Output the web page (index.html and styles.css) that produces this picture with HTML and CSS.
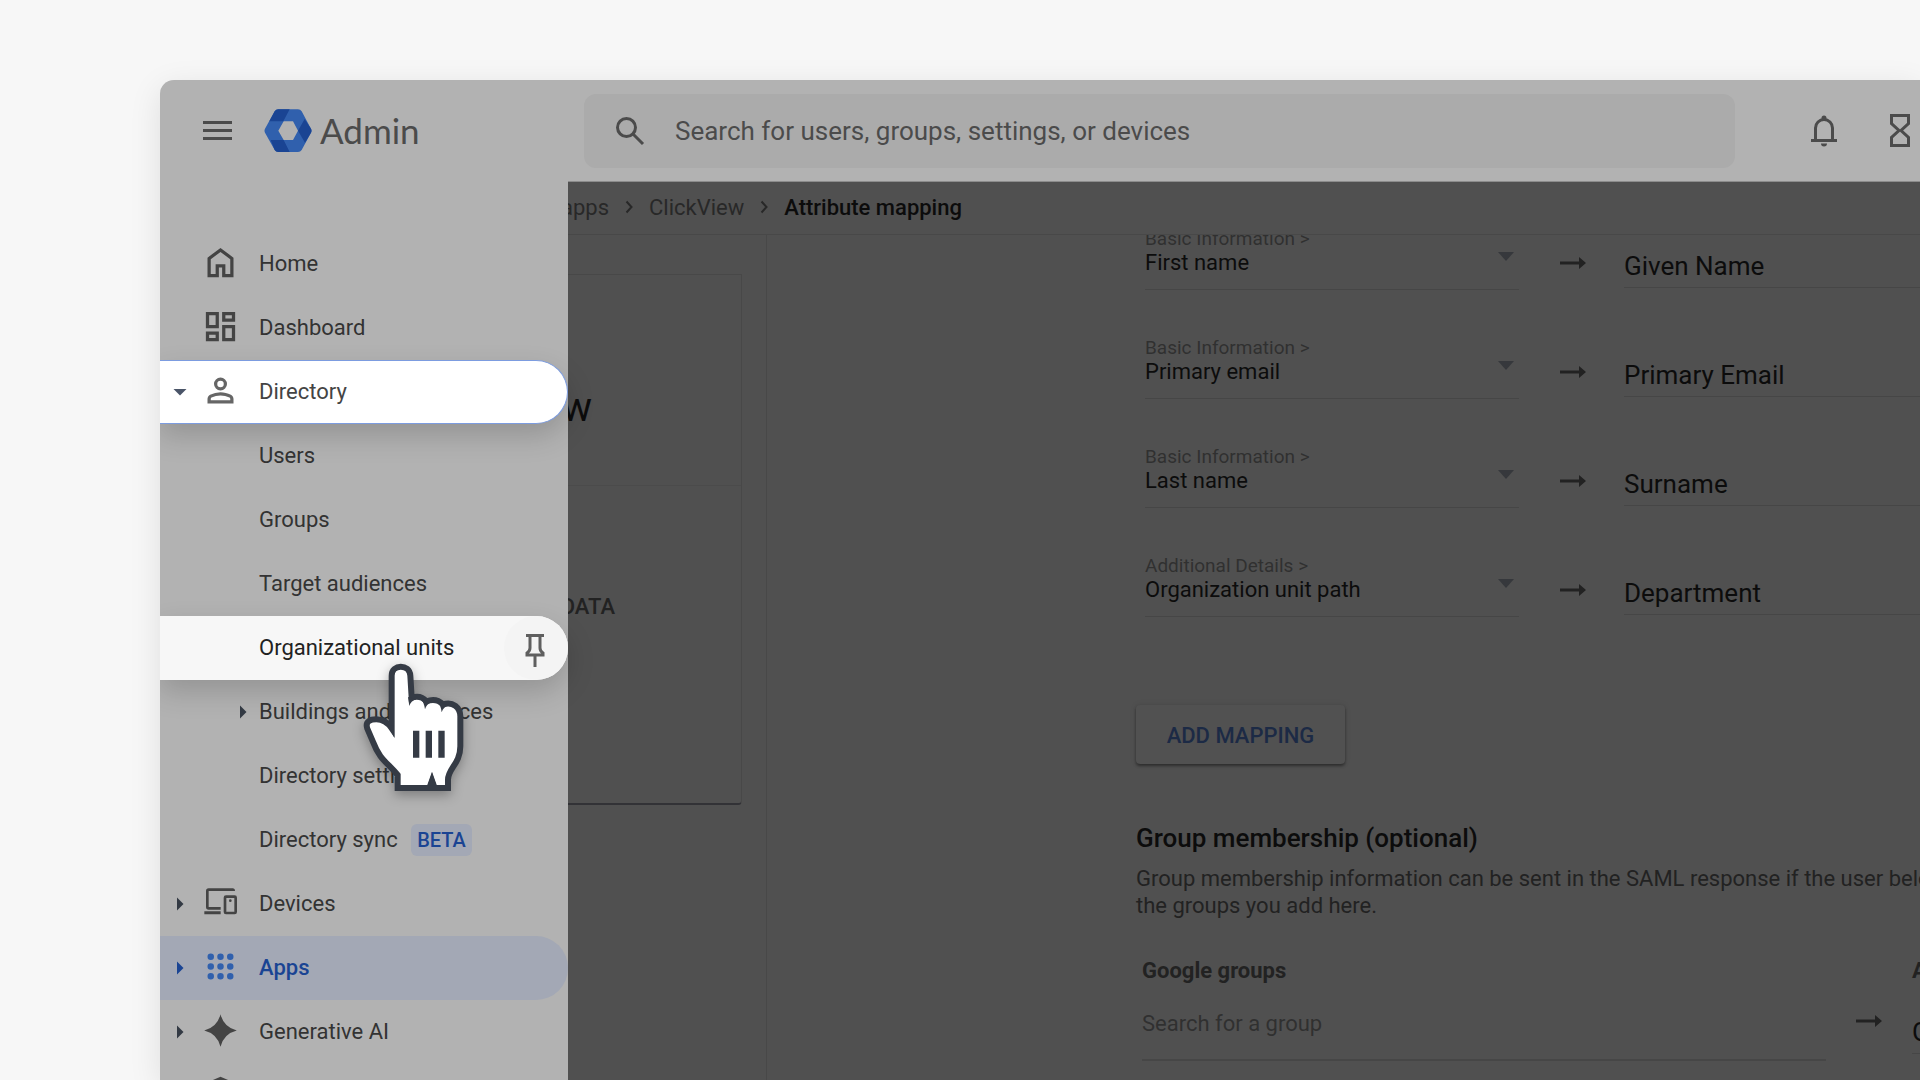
FILE: index.html
```html
<!DOCTYPE html>
<html lang="en">
<head>
<meta charset="utf-8">
<meta name="viewport" content="width=device-width, initial-scale=1">
<title>Admin - Attribute mapping</title>
<link rel="stylesheet" href="styles.css">
</head>
<body>
<svg class="sprite" aria-hidden="true">
  <symbol id="caret-right" viewBox="0 0 24 24"><path d="M9 5.500v13l6.500-6.500z"/></symbol>
  <symbol id="caret-down" viewBox="0 0 24 24"><path d="M5.500 9h13L12 15.500z"/></symbol>
  <symbol id="arrow" viewBox="0 0 26 14"><path d="M0 5.500h19V1l7 6-7 6V8.500H0z"/></symbol>
  <symbol id="chevron" viewBox="0 0 8 14"><path d="M1.500 1.500L6.500 7l-5 5.500" fill="none" stroke="currentColor" stroke-width="2"/></symbol>
</svg>
<div class="window">
  <header class="topbar">
    <div class="brand">
      <button class="icon-button" type="button" aria-label="Main menu">
        <svg width="29" height="20" viewBox="0 0 29 20"><path d="M0 0h29v3H0zM0 8h29v3H0zM0 16h29v3H0z"/></svg>
      </button>
      <a class="logo" href="#">
        <svg width="48" height="43" viewBox="342 117 142 129" aria-hidden="true">
          <path fill="#3060ad" fill-rule="evenodd" d="M384 118H443Q450 118 454 124L482 176Q485 182 482 188L454 240Q450 246 443 246H384Q377 246 373 240L344 188Q341 182 344 176L373 124Q377 118 384 118ZM384 182L400 210H428L443 182L428 154H400Z"/>
          <path fill="#1a4493" d="M384 118H418L399 154H357L373 124Q377 118 384 118ZM463 147L482 176Q485 182 482 188L464 218L443 182ZM361 210H400L418 246H384Q377 246 373 240Z"/>
        </svg>
        <span class="product">Admin</span>
      </a>
    </div>
    <form class="search" role="search">
      <svg width="30" height="30" viewBox="0 0 30 30" aria-hidden="true"><g fill="none" stroke="#4b4b4b" stroke-width="3"><circle cx="11.500" cy="11.500" r="9"/><path d="M18 18l10 10"/></g></svg>
      <input type="search" aria-label="Search" placeholder="Search for users, groups, settings, or devices">
    </form>
    <div class="tools">
      <button class="icon-button" type="button" aria-label="Notifications">
        <svg width="26" height="32" viewBox="0 0 26 32"><path fill="none" stroke="#4b4b4b" stroke-width="3" d="M0 25.500h26M4.500 25V13a8.500 8.500 0 0 1 17 0v12"/><path d="M10.500 4V3a2.500 2.500 0 0 1 5 0v1zM10 28.500h6a3 3 0 0 1-6 0z"/></svg>
      </button>
      <button class="icon-button" type="button" aria-label="Tasks">
        <svg width="20" height="33" viewBox="0 0 20 33"><path fill="none" stroke="#4b4b4b" stroke-width="3" d="M1.500 1.500h17v8L11 16.500l7.500 7v8h-17v-8l7.500-7-7.500-7z"/></svg>
      </button>
    </div>
  </header>

  <div class="body">
    <nav class="sidebar" aria-label="Main">
      <a class="nav-link" href="#"><svg class="icon" viewBox="0 0 24 24"><path d="M6 19h3v-6h6v6h3v-9l-6-4.500L6 10zm-2 2V9l8-6 8 6v12h-7v-6h-2v6z"/></svg><span class="label">Home</span></a>
      <a class="nav-link" href="#"><svg class="icon" viewBox="0 0 24 24"><path d="M19 5v2h-4V5zM9 5v6H5V5zm10 8v6h-4v-6zM9 17v2H5v-2zM21 3h-8v6h8zM11 3H3v10h8zm10 8h-8v10h8zm-10 4H3v6h8z"/></svg><span class="label">Dashboard</span></a>
      <a class="nav-link open" href="#"><svg class="caret"><use href="#caret-down"/></svg><svg class="icon" viewBox="0 0 24 24"><path d="M12 12a4 4 0 1 1 0-8 4 4 0 0 1 0 8zm-8 8v-2.800c0-.570.150-1.090.440-1.560A2.950 2.950 0 0 1 5.600 14.550 14.800 14.800 0 0 1 12 13c2.230 0 4.370.520 6.400 1.550.480.250.870.610 1.160 1.090.290.470.440.990.440 1.560V20zm2-2h12v-.800a.98.98 0 0 0-.500-.850A12.400 12.400 0 0 0 12 15c-1.880 0-3.720.450-5.500 1.350a.98.98 0 0 0-.500.850zm6-8a2 2 0 1 0 0-4 2 2 0 0 0 0 4z"/></svg><span class="label">Directory</span></a>
      <a class="nav-link" href="#"><span class="label">Users</span></a>
      <a class="nav-link" href="#"><span class="label">Groups</span></a>
      <a class="nav-link" href="#"><span class="label">Target audiences</span></a>
      <div class="nav-row">
        <a class="nav-link" href="#"><span class="label">Organizational units</span></a>
        <button class="pin" type="button" aria-label="Pin">
          <svg width="20" height="33" viewBox="0 0 20 33"><g fill="none" stroke="#5f5f5f" stroke-width="3"><path d="M1 1.500h18M5 2v12q0 3-3 5v2h16v-2q-3-2-3-5V2M10 21v12"/></g></svg>
        </button>
        <svg class="pointer" viewBox="640 185 306 390" aria-hidden="true">
          <path fill="#fff" stroke="#353b45" stroke-width="18" d="M744 563V524C715 488 690 478 671 427L653 385C645 362 664 357 680 357C702 357 715 368 726 384V226C726 190 780 190 782 226L786 292C806 286 820 291 830 303C850 295 868 300 880 312C910 302 932 322 932 348V438C932 490 895 505 895 538V563H853L847 545L841 563Z"/>
          <path fill="#353b45" d="M714 372L733 410V378ZM775 290L779 317Q783 302 800 297ZM813 296Q823 305 826 327Q830 312 845 306ZM862 303Q873 313 876 336Q881 320 898 315ZM847 514L862 556H832ZM790 391h19v81h-19zM828 391h19v81h-19zM866 391h19v81h-19z"/>
        </svg>
      </div>
      <a class="nav-link nested" href="#"><svg class="caret"><use href="#caret-right"/></svg><span class="label">Buildings and resources</span></a>
      <a class="nav-link" href="#"><span class="label">Directory settings</span></a>
      <a class="nav-link" href="#"><span class="label">Directory sync <span class="badge">BETA</span></span></a>
      <a class="nav-link" href="#"><svg class="caret"><use href="#caret-right"/></svg><svg class="icon" viewBox="153 155 117 117"><path d="M163 240h49v9h-49zM212 235h-36q-8 0-8-8v-48q0-8 8-8h72q7 0 7 8h-79v48h36z"/><rect x="225" y="196" width="32" height="49" rx="3" fill="none" stroke="currentColor" stroke-width="8"/><circle cx="241" cy="208" r="4"/></svg><span class="label">Devices</span></a>
      <a class="nav-link current" href="#" aria-current="page"><svg class="caret"><use href="#caret-right"/></svg><svg class="icon" viewBox="0 0 24 24"><path d="M6 8a2 2 0 1 0 0-4 2 2 0 0 0 0 4zm6 0a2 2 0 1 0 0-4 2 2 0 0 0 0 4zm6 0a2 2 0 1 0 0-4 2 2 0 0 0 0 4zM6 14a2 2 0 1 0 0-4 2 2 0 0 0 0 4zm6 0a2 2 0 1 0 0-4 2 2 0 0 0 0 4zm6 0a2 2 0 1 0 0-4 2 2 0 0 0 0 4zM6 20a2 2 0 1 0 0-4 2 2 0 0 0 0 4zm6 0a2 2 0 1 0 0-4 2 2 0 0 0 0 4zm6 0a2 2 0 1 0 0-4 2 2 0 0 0 0 4z"/></svg><span class="label">Apps</span></a>
      <a class="nav-link" href="#"><svg class="caret"><use href="#caret-right"/></svg><svg class="icon" viewBox="0 0 24 24"><path d="M12 2Q14 10 22 12Q14 14 12 22Q10 14 2 12Q10 10 12 2z"/></svg><span class="label">Generative AI</span></a>
      <a class="nav-link" href="#"><svg class="caret"><use href="#caret-right"/></svg><svg class="icon" viewBox="0 0 24 24"><path d="M12 1L3 5v6c0 5.550 3.840 10.740 9 12 5.160-1.260 9-6.450 9-12V5z"/></svg><span class="label">Security</span></a>
    </nav>

    <div class="content">
      <nav class="crumbs" aria-label="Breadcrumb">
        <a class="crumb-first" href="#">apps</a>
        <svg width="8" height="14"><use href="#chevron"/></svg>
        <a href="#">ClickView</a>
        <svg width="8" height="14"><use href="#chevron"/></svg>
        <span class="here">Attribute mapping</span>
      </nav>
      <div class="panes">
        <aside class="details">
          <div class="card">
            <div class="card-head">w</div>
            <div class="card-action">DATA</div>
          </div>
        </aside>
        <main class="main">
          <form class="mapping">
            <div class="map-row">
              <div class="pick"><label for="a1">Basic Information &gt;</label><select id="a1"><option>First name</option></select><svg class="drop" viewBox="0 0 16 9"><path d="M0 0h16L8 9z"/></svg></div>
              <svg class="arrow"><use href="#arrow"/></svg>
              <input class="attr" aria-label="App attribute" value="Given Name">
            </div>
            <div class="map-row">
              <div class="pick"><label for="a2">Basic Information &gt;</label><select id="a2"><option>Primary email</option></select><svg class="drop" viewBox="0 0 16 9"><path d="M0 0h16L8 9z"/></svg></div>
              <svg class="arrow"><use href="#arrow"/></svg>
              <input class="attr" aria-label="App attribute" value="Primary Email">
            </div>
            <div class="map-row">
              <div class="pick"><label for="a3">Basic Information &gt;</label><select id="a3"><option>Last name</option></select><svg class="drop" viewBox="0 0 16 9"><path d="M0 0h16L8 9z"/></svg></div>
              <svg class="arrow"><use href="#arrow"/></svg>
              <input class="attr" aria-label="App attribute" value="Surname">
            </div>
            <div class="map-row">
              <div class="pick"><label for="a4">Additional Details &gt;</label><select id="a4"><option>Organization unit path</option></select><svg class="drop" viewBox="0 0 16 9"><path d="M0 0h16L8 9z"/></svg></div>
              <svg class="arrow"><use href="#arrow"/></svg>
              <input class="attr" aria-label="App attribute" value="Department">
            </div>
            <button class="add" type="button">ADD MAPPING</button>
            <h2>Group membership (optional)</h2>
            <p>Group membership information can be sent in the SAML response if the user belongs to any of<br>the groups you add here.</p>
            <div class="group-row">
              <div class="group-field"><label for="g1">Google groups</label><input id="g1" class="group-search" placeholder="Search for a group"></div>
              <svg class="arrow"><use href="#arrow"/></svg>
              <div class="group-field"><label for="g2">App attribute</label><input id="g2" class="attr" value="Groups"></div>
            </div>
          </form>
        </main>
      </div>
    </div>
  </div>
</div>
</body>
</html>
```
FILE: styles.css
```css
* {
  box-sizing: border-box;
}

body {
  margin: 0;
  height: 100vh;
  overflow: hidden;
  background: #f7f7f7;
  color: #333;
  font-family: Roboto, "Liberation Sans", sans-serif;
  font-size: 22px;
}

a {
  color: inherit;
  text-decoration: none;
}

button,
input,
select {
  margin: 0;
  padding: 0;
  border: 0;
  background: none;
  color: inherit;
  font: inherit;
  appearance: none;
}

svg {
  display: block;
  flex: none;
  fill: currentColor;
}

.sprite {
  display: none;
}

.window {
  display: flex;
  flex-direction: column;
  height: calc(100vh - 80px);
  margin: 80px 0 0 160px;
  overflow: hidden;
  border-radius: 14px 0 0 0;
  background: #b2b2b2;
  box-shadow: 0 8px 32px rgba(0, 0, 0, 0.1);
}

/* Top bar */

.topbar {
  display: flex;
  flex: none;
  align-items: center;
  height: 101px;
  padding-right: 10px;
  color: #4b4b4b;
}

.brand {
  display: flex;
  align-items: center;
  gap: 32px;
  width: 424px;
  padding-left: 43px;
}

.logo {
  display: flex;
  align-items: center;
  gap: 8px;
  font-family: Lato, sans-serif;
  font-size: 35px;
  line-height: 40px;
}

.product {
  padding-bottom: 2px;
}

.search {
  display: flex;
  flex: 1;
  align-items: center;
  gap: 30px;
  height: 74px;
  padding-left: 31px;
  border-radius: 12px;
  background: #ababab;
}

.search input {
  flex: 1;
  min-width: 0;
  font-size: 26px;
  outline: 0;
}

.search input::placeholder {
  color: #4b4b4b;
  opacity: 1;
}

.tools {
  display: flex;
  align-items: center;
  gap: 53px;
  padding-left: 76px;
}

/* Navigation drawer */

.body {
  display: flex;
  flex: 1;
  min-height: 0;
}

.sidebar {
  position: relative;
  z-index: 1;
  flex: none;
  width: 408px;
  padding-top: 51px;
}

.nav-link {
  display: grid;
  grid-template-columns: 33px 58px 1fr;
  align-items: center;
  height: 64px;
  padding-left: 8px;
  border-radius: 0 32px 32px 0;
}

.caret {
  grid-column: 1;
  grid-row: 1;
  width: 24px;
  height: 24px;
  color: #333a44;
}

.nested .caret {
  grid-column: 2;
  justify-self: end;
  margin-right: 4px;
}

.icon {
  grid-column: 2;
  grid-row: 1;
  width: 39px;
  height: 39px;
  margin-bottom: 4px;
  color: #444;
}

.label {
  grid-column: 3;
  grid-row: 1;
  line-height: 32px;
}

.open,
.nav-row {
  position: relative;
  box-shadow: 0 12px 28px rgba(0, 0, 0, 0.17);
}

.open {
  border: 1px solid #7c9ce0;
  border-left: 0;
  background: #fff;
  color: #444;
}

.open .icon {
  color: #666;
}

.open .caret {
  color: #4a5568;
}

.nav-row {
  z-index: 1;
  border-radius: 0 32px 32px 0;
  background: #f7f7f7;
  color: #222;
}

.pin {
  position: absolute;
  top: 0;
  right: 0;
  display: grid;
  place-items: center;
  width: 64px;
  height: 64px;
  padding: 4px 2px 0 0;
  border-radius: 50%;
  background: #f4f4f4;
}

.pointer {
  position: absolute;
  top: 46px;
  left: 203px;
  width: 102px;
  height: 130px;
  filter: drop-shadow(0 4px 6px rgba(0, 0, 0, 0.3));
}

.badge {
  display: inline-block;
  margin-left: 8px;
  padding: 0 6px;
  border-radius: 6px;
  background: #a3a8b5;
  color: #1a4493;
  font-size: 20px;
  font-weight: 500;
}

.current {
  background: #a3a8b5;
  color: #1a4493;
  font-weight: 500;
}

.current .caret {
  color: #1a4493;
}

.current .icon {
  color: #3060ad;
}

/* Content */

.content {
  display: flex;
  flex: 1;
  flex-direction: column;
  min-width: 0;
  border-top: 1px solid #8c8c8c;
  background: #505050;
  color: #0c0c0c;
}

.crumbs {
  display: flex;
  flex: none;
  align-items: center;
  gap: 16px;
  height: 53px;
  padding-bottom: 2px;
  border-bottom: 1px solid #484848;
  color: #282828;
}

.crumb-first {
  display: flex;
  justify-content: flex-end;
  width: 41px;
  overflow: hidden;
}

.here {
  color: #0c0c0c;
  font-weight: 500;
}

.panes {
  display: flex;
  flex: 1;
  min-height: 0;
}

.details {
  flex: none;
  width: 199px;
  padding: 39px 24px 0 0;
  border-right: 1px solid #484848;
}

.card {
  height: 531px;
  overflow: hidden;
  border: 1px solid #484848;
  border-left: 0;
  border-bottom: 2px solid #323236;
  border-radius: 0 0 4px 0;
}

.card-head,
.card-action {
  display: flex;
  justify-content: flex-end;
}

.card-head {
  height: 211px;
  padding: 109px 149px 0 0;
  border-bottom: 1px solid #4b4b4b;
  font-size: 40px;
  line-height: 48px;
}

.card-action {
  padding: 108px 126px 0 0;
  color: #222;
  font-weight: 500;
  line-height: 26px;
}

.main {
  flex: 1;
  min-width: 0;
  overflow: hidden;
  padding-left: 369px;
}

.mapping {
  width: calc(100% + 200px);
  margin-top: -54px;
}

.map-row {
  display: grid;
  grid-template-columns: 374px 26px 1fr;
  align-items: end;
  height: 109px;
  padding-left: 9px;
}

.map-row .arrow {
  margin: 0 0 20px 41px;
}

.pick {
  position: relative;
  display: flex;
  flex-direction: column;
  padding-bottom: 14px;
  border-bottom: 1px solid #464646;
}

.pick label {
  color: #303030;
  font-size: 19px;
  line-height: 24px;
}

.pick select {
  height: 24px;
  line-height: 24px;
}

.drop {
  position: absolute;
  top: 25px;
  right: 5px;
  width: 16px;
  height: 9px;
  color: #36383c;
}

.arrow {
  width: 26px;
  height: 14px;
  color: #222;
}

.attr {
  height: 43px;
  border-bottom: 1px solid #464646;
  font-size: 26px;
}

.map-row .attr {
  margin: 0 0 2px 79px;
}

.add {
  display: block;
  width: 209px;
  height: 59px;
  margin-top: 88px;
  padding-top: 2px;
  border-radius: 4px;
  box-shadow: 0 2px 3px rgba(0, 0, 0, 0.4), 0 0 6px rgba(0, 0, 0, 0.1);
  background: #515151;
  color: #1c2a45;
  font-weight: 500;
}

h2 {
  margin: 58px 0 0;
  font-size: 26px;
  font-weight: 500;
  line-height: 32px;
}

p {
  margin: 11px 0 0;
  color: #222;
  line-height: 27px;
  white-space: nowrap;
}

.group-row {
  display: grid;
  grid-template-columns: 684px 26px 1fr;
  gap: 30px;
  padding: 40px 0 0 6px;
}

.group-row .arrow {
  margin-top: 55px;
}

.group-field {
  display: flex;
  flex-direction: column;
}

.group-field label {
  color: #222;
  font-weight: 700;
  line-height: 24px;
}

.group-search {
  height: 78px;
  padding-top: 4px;
  border-bottom: 2px solid #464646;
}

.group-search::placeholder {
  color: #303030;
  opacity: 1;
}

.group-field .attr {
  margin-top: 28px;
}
```
